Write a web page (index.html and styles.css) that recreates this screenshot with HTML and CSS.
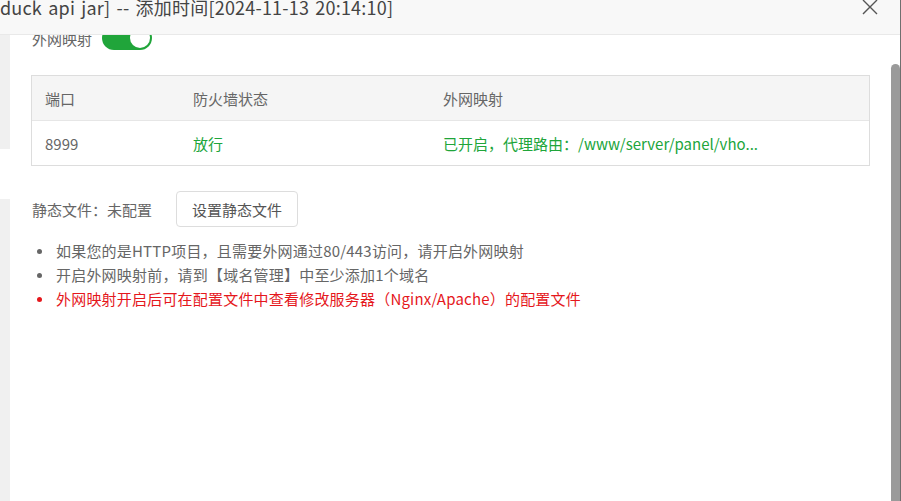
FILE: index.html
```html
<!DOCTYPE html>
<html lang="zh-CN">
<head>
    <meta charset="UTF-8">
    <title>项目设置</title>
    <link rel="stylesheet" href="styles.css">
</head>
<body>
<div class="layer">
    <div class="layer-title">
        <span class="title-text">duck api jar] -- 添加时间[2024-11-13 20:14:10]</span>
        <span class="layer-close">
            <svg width="16" height="16" viewBox="0 0 16 16"><path d="M1 1 L15 15 M15 1 L1 15" stroke="#555" stroke-width="1.4" fill="none"/></svg>
        </span>
    </div>

    <div class="layer-body">
        <div class="side">
            <div class="side-block"></div>
            <div class="side-gap"></div>
            <div class="side-rest"></div>
        </div>

        <div class="main">
            <div class="map-switch">
                <span class="switch-label">外网映射</span>
                <span class="switch on"><span class="knob"></span></span>
            </div>

            <div class="port-table">
                <div class="row head">
                    <div class="cell">端口</div>
                    <div class="cell">防火墙状态</div>
                    <div class="cell">外网映射</div>
                </div>
                <div class="row">
                    <div class="cell">8999</div>
                    <div class="cell green">放行</div>
                    <div class="cell green">已开启，代理路由：/www/server/panel/vho...</div>
                </div>
            </div>

            <div class="static-row">
                <span class="static-label">静态文件：未配置</span>
                <button type="button" class="btn">设置静态文件</button>
            </div>

            <ul class="help-list">
                <li>如果您的是HTTP项目，且需要外网通过80/443访问，请开启外网映射</li>
                <li>开启外网映射前，请到【域名管理】中至少添加1个域名</li>
                <li class="red">外网映射开启后可在配置文件中查看修改服务器（Nginx/Apache）的配置文件</li>
            </ul>
        </div>

        <div class="scrollbar"><div class="thumb"></div></div>
    </div>
</div>
</body>
</html>
```

FILE: styles.css
```css
* {
    margin: 0;
    padding: 0;
    box-sizing: border-box;
    font-family: "Noto Sans CJK SC", "Noto Sans", sans-serif;
}

html, body {
    width: 901px;
    height: 501px;
    overflow: hidden;
    background: #fff;
}

.layer {
    width: 901px;
    height: 501px;
    border-right: 1px solid #6f6f6f;
    display: flex;
    flex-direction: column;
}

.layer-title {
    position: relative;
    height: 35px;
    background: #f8f8f8;
    border-bottom: 1px solid #e9e9e9;
    overflow: hidden;
    white-space: nowrap;
}

.title-text {
    display: block;
    height: 15px;
    line-height: 15px;
    font-size: 18px;
    color: #444;
    letter-spacing: 0.2px;
    word-spacing: 2px;
}

.layer-close {
    position: absolute;
    left: 862px;
    top: -4px;
    width: 16px;
    height: 16px;
}

.layer-body {
    flex: 1;
    display: flex;
    overflow: hidden;
}

.side {
    width: 10px;
    display: flex;
    flex-direction: column;
}

.side-block {
    height: 114px;
    background: #f0f0f0;
}

.side-gap {
    height: 50px;
}

.side-rest {
    flex: 1;
    background: #f0f0f0;
}

.main {
    flex: 1;
    padding: 0 21px 0 21px;
    overflow: hidden;
}

.map-switch {
    display: flex;
    align-items: center;
    gap: 10px;
    margin-top: -9px;
    height: 24px;
    padding-left: 1px;
}

.switch-label {
    font-size: 15px;
    color: #666;
}

.switch {
    width: 50px;
    height: 24px;
    border-radius: 12px;
    background: #20a53a;
    position: relative;
}

.knob {
    position: absolute;
    right: 2px;
    top: 2px;
    width: 20px;
    height: 20px;
    border-radius: 50%;
    background: #fff;
}

.port-table {
    margin-top: 25px;
    border: 1px solid #ddd;
}

.row {
    display: grid;
    grid-template-columns: 148px 250px 1fr;
    height: 44px;
    align-items: center;
    font-size: 15px;
    color: #666;
}

.row.head {
    background: #f5f5f5;
    height: 45px;
    border-bottom: 1px solid #e6e6e6;
}

.cell {
    padding: 0 13px;
    white-space: nowrap;
    overflow: hidden;
}

.green {
    color: #20a53a;
}

.static-row {
    display: flex;
    align-items: center;
    gap: 24px;
    margin-top: 25px;
    padding-left: 1px;
}

.static-label {
    font-size: 15px;
    color: #666;
}

.btn {
    height: 36px;
    padding: 0 15px;
    border: 1px solid #ddd;
    border-radius: 4px;
    background: #fff;
    color: #555;
    font-size: 15px;
}

.help-list {
    margin-top: 12px;
    list-style: none;
    padding-left: 25px;
}

.help-list li {
    position: relative;
    line-height: 24px;
    font-size: 15px;
    color: #666;
    letter-spacing: 0.2px;
}

.help-list li::before {
    content: "";
    position: absolute;
    left: -19px;
    top: 10px;
    width: 5px;
    height: 5px;
    border-radius: 50%;
    background: #666;
}

.help-list li.red {
    color: #e5171c;
}

.help-list li.red::before {
    background: #e5171c;
}

.scrollbar {
    width: 9px;
    padding-top: 29px;
}

.thumb {
    height: 100%;
    background: #9a9a9a;
    border-radius: 5px 5px 0 0;
}
```
